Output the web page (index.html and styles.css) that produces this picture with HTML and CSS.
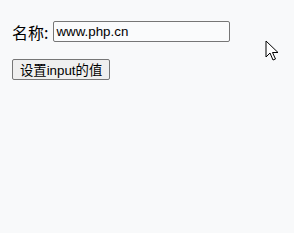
FILE: index.html
```html
<!DOCTYPE html>
<html lang="zh-CN">
<head>
    <meta charset="UTF-8">
    <meta name="viewport" content="width=device-width, initial-scale=1.0">
    <title>设置input的值</title>
    <link rel="stylesheet" href="styles.css">
</head>
<body>
    <div class="campo">
        <label class="campo_label" for="nome">名称:</label>
        <input type="text" id="nome" class="campo_text" value="www.php.cn">
    </div>
    <div class="acao">
        <button type="button" class="acao_btn">设置input的值</button>
    </div>
    <svg class="cursor" width="14" height="22" viewBox="0 0 14 22">
        <path d="M1 1 L1 17 L5 13 L8 20 L10.5 19 L7.5 12.5 L13 12.5 Z" fill="#fff" stroke="#000" stroke-width="1" stroke-linejoin="miter"/>
    </svg>
</body>
</html>
```

FILE: styles.css
```css
*{margin: 0;padding: 0;}
body{
    height: 100vh;
    background-color: #f8f9fa;
    padding: 21px 12px;
    box-sizing: border-box;
    font-family: "Liberation Sans", "Noto Sans CJK SC", sans-serif;
    overflow: hidden;
    position: relative;
}
.campo{
    display: flex;
    align-items: center;
    gap: 5px;
    height: 21px;
}
.campo_label{
    font-size: 16px;
    font-family: "Noto Sans CJK SC", sans-serif;
}
.campo_text{
    width: 177px;
    height: 21px;
    box-sizing: border-box;
    border: 1px solid #767676;
    border-radius: 2px;
    padding: 1px 2px;
    font-size: 13.33px;
    font-family: "Liberation Sans", sans-serif;
    background-color: #fafbfc;
    color: #000;
}
.acao{
    margin-top: 17px;
}
.acao_btn{
    height: 21px;
    padding: 0 7px;
    border: 1px solid #767676;
    border-radius: 2px;
    background-color: #efefef;
    font-size: 13.33px;
    font-family: "Liberation Sans", "Noto Sans CJK SC", sans-serif;
    color: #000;
}
.cursor{
    position: absolute;
    left: 265px;
    top: 40px;
}
```
